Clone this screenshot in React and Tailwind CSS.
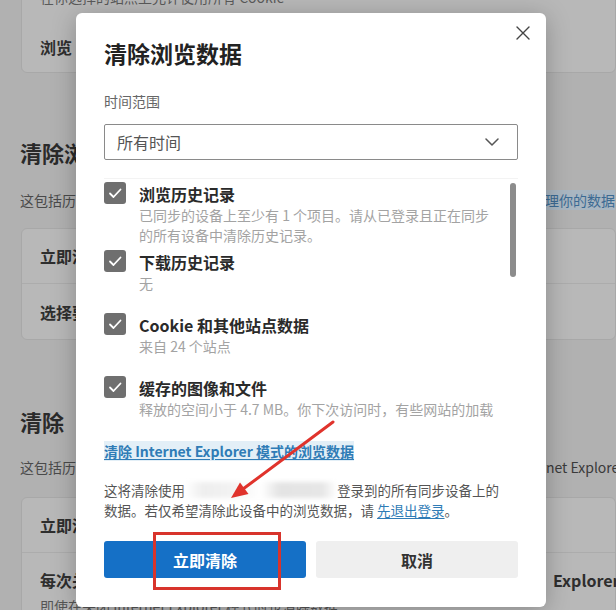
import React from "react";

const FONT = { fontFamily: "'Noto Sans CJK SC', 'Noto Sans', sans-serif" };

function Check() {
  return (
    <div className="w-[22px] h-[22px] shrink-0 rounded-[3px] bg-[#6f6f6f] flex items-center justify-center">
      <svg width="22" height="22" viewBox="0 0 22 22" fill="none">
        <path d="M6 11.5 L9.5 15 L16.5 7.5" stroke="#fff" strokeWidth="1.8" strokeLinecap="round" strokeLinejoin="round" />
      </svg>
    </div>
  );
}

function Item({ h, label, subs }) {
  return (
    <div className={`flex gap-[13px] ${h}`}>
      <Check />
      <div className="mt-[1px] min-w-0">
        <div className="text-[16px] leading-[22px] font-bold text-[#2a2a2a] whitespace-nowrap">{label}</div>
        {subs.map((s, i) => (
          <div key={i} className="text-[14px] leading-[20px] text-[#a3a3a3] whitespace-nowrap">{s}</div>
        ))}
      </div>
    </div>
  );
}

export default function App() {
  return (
    <div className="relative w-[616px] h-[610px] overflow-hidden bg-[#b1b1b1]" style={FONT}>
      {/* background settings page */}
      <div className="flex flex-col">
        <div className="-mt-[36px] ml-[21px] h-[109px] rounded-[6px] bg-[#b8b8b8] border border-[#a8a8a8] pl-[18px] pt-[22px]">
          <div className="text-[14px] leading-[20px] text-[#5a5a5a] whitespace-nowrap">在你选择的站点上允许使用所有 Cookie</div>
          <div className="mt-[29px] text-[16px] leading-[22px] font-bold text-[#2e2e2e]">浏览</div>
        </div>
        <div className="mt-[64px] ml-[20px] text-[22px] leading-[30px] font-bold text-[#2a2a2a] whitespace-nowrap">清除浏览数据</div>
        <div className="mt-[23px] ml-[20px] flex text-[14px] leading-[20px] whitespace-nowrap">
          <span className="w-[511px] shrink-0 overflow-hidden text-[#4a4a4a]">这包括历史记录、密码、Cookie 等。将只删除此配置文件中的数据。</span>
          <span className="text-[#3b6a93] bg-[#a9b6c1]">管理你的数据</span>
        </div>
        <div className="mt-[18px] ml-[21px] h-[112px] rounded-[6px] bg-[#b8b8b8] border border-[#a8a8a8] flex flex-col">
          <div className="h-[55px] flex items-center pl-[18px] text-[16px] font-bold text-[#2e2e2e] border-b border-[#acacac] whitespace-nowrap">立即清除浏览数据</div>
          <div className="flex-1 flex items-center pl-[18px] text-[16px] font-bold text-[#2e2e2e] whitespace-nowrap">选择要清除的内容</div>
        </div>
        <div className="mt-[66px] ml-[20px] text-[22px] leading-[30px] font-bold text-[#2a2a2a] whitespace-nowrap">
          清除<span className="ml-[14px]">Internet Explorer 模式的浏览数据</span>
        </div>
        <div className="mt-[21px] ml-[20px] flex text-[14px] leading-[20px] whitespace-nowrap">
          <span className="w-[495px] shrink-0 overflow-hidden text-[#4a4a4a]">这包括历史记录、Cookie 等。这将清除</span>
          <span className="text-[#3a3a3a]">Internet Explorer 中的数据</span>
        </div>
        <div className="mt-[20px] ml-[21px] h-[140px] rounded-[6px] bg-[#b8b8b8] border border-[#a8a8a8] flex flex-col">
          <div className="h-[55px] flex items-center pl-[18px] text-[16px] font-bold text-[#2e2e2e] border-b border-[#acacac] whitespace-nowrap">立即清除浏览数据</div>
          <div className="pt-[16px] pl-[18px]">
            <div className="flex text-[16px] leading-[22px] font-bold text-[#2e2e2e] whitespace-nowrap">
              <span className="w-[513px] shrink-0 overflow-hidden">每次关闭 Internet</span>
              <span>Explorer 模式时</span>
            </div>
            <div className="mt-[5px] text-[14px] leading-[20px] text-[#555] whitespace-nowrap">即使在关闭 Internet Explorer 模式时也清除数据</div>
          </div>
        </div>
      </div>

      {/* modal */}
      <div className="absolute left-[76px] top-[13px] w-[470px] h-[594px] bg-white rounded-[6px] shadow-[0_4px_24px_rgba(0,0,0,0.25)] px-[28px] pt-[13px] flex flex-col">
        <div className="flex justify-between items-start">
          <div className="mt-[12px] text-[23px] leading-[30px] font-bold text-[#222] whitespace-nowrap">清除浏览数据</div>
          <svg className="-mr-[12px]" width="14" height="14" viewBox="0 0 14 14" fill="none">
            <path d="M1 1 L13 13 M13 1 L1 13" stroke="#444" strokeWidth="1.4" strokeLinecap="round" />
          </svg>
        </div>
        <div className="mt-[23px] text-[14px] leading-[20px] text-[#666]">时间范围</div>
        <div className="mt-[13px] h-[36px] border border-[#8a8a8a] rounded-[2px] flex items-center justify-between pl-[12px] pr-[18px]">
          <span className="text-[16px] text-[#555]">所有时间</span>
          <svg width="14" height="8" viewBox="0 0 14 8" fill="none">
            <path d="M1 1 L7 7 L13 1" stroke="#555" strokeWidth="1.5" strokeLinecap="round" strokeLinejoin="round" />
          </svg>
        </div>
        <div className="mt-[18px] h-[240px] overflow-hidden flex border-t border-[#f3f3f3]">
          <div className="flex-1 pt-[3px] min-w-0 overflow-hidden">
            <Item h="h-[68px]" label="浏览历史记录" subs={["已同步的设备上至少有 1 个项目。请从已登录且正在同步", "的所有设备中清除历史记录。"]} />
            <Item h="h-[63px]" label="下载历史记录" subs={["无"]} />
            <Item h="h-[63px]" label="Cookie 和其他站点数据" subs={["来自 24 个站点"]} />
            <Item h="h-[44px]" label="缓存的图像和文件" subs={["释放的空间小于 4.7 MB。你下次访问时，有些网站的加载"]} />
          </div>
          <div className="w-[6px] ml-[4px] mr-[2px] pt-[4px]">
            <div className="w-[6px] h-[94px] rounded-full bg-[#8c8c8c]"></div>
          </div>
        </div>
        <div className="mt-[23px] text-[14px] leading-[20px] font-bold whitespace-nowrap">
          <span className="text-[#2f7cb6] underline underline-offset-2 bg-[#e3eff7]">清除 Internet Explorer 模式的浏览数据</span>
        </div>
        <div className="mt-[19px] text-[13.5px] leading-[20px] text-[#555]">
          <div className="whitespace-nowrap flex items-center">
            <span>这将清除使用</span>
            <span className="inline-block w-[152px] h-[16px] blur-[2px] bg-[linear-gradient(90deg,#ffffff_0%,#eeeeee_12%,#f2f2f2_30%,#ffffff_50%,#e4e4e4_62%,#e6e6e6_90%,#ffffff_100%)]"></span>
            <span>登录到的所有同步设备上的</span>
          </div>
          <div className="whitespace-nowrap">
            数据。若仅希望清除此设备中的浏览数据，请 <span className="text-[#2f7cb6] underline underline-offset-2">先退出登录</span>。
          </div>
        </div>
        <div className="mt-[21px] flex gap-[10px]">
          <div className="flex-1 h-[37px] rounded-[3px] bg-[#1570c6] flex items-center justify-center text-white text-[16px] font-bold">立即清除</div>
          <div className="flex-1 h-[37px] rounded-[3px] bg-[#efefef] flex items-center justify-center text-[#333] text-[16px] font-bold">取消</div>
        </div>
      </div>

      {/* annotations */}
      <div className="absolute left-[153px] top-[532px] w-[128px] h-[58px] border-[3px] border-[#d8342c]"></div>
      <svg className="absolute left-0 top-0 pointer-events-none" width="616" height="610" viewBox="0 0 616 610">
        <line x1="333" y1="422" x2="243" y2="489" stroke="#e0332c" strokeWidth="3" strokeLinecap="round" />
        <polygon points="231,498 248.5,494 240,482.5" fill="#e0332c" />
      </svg>
    </div>
  );
}
